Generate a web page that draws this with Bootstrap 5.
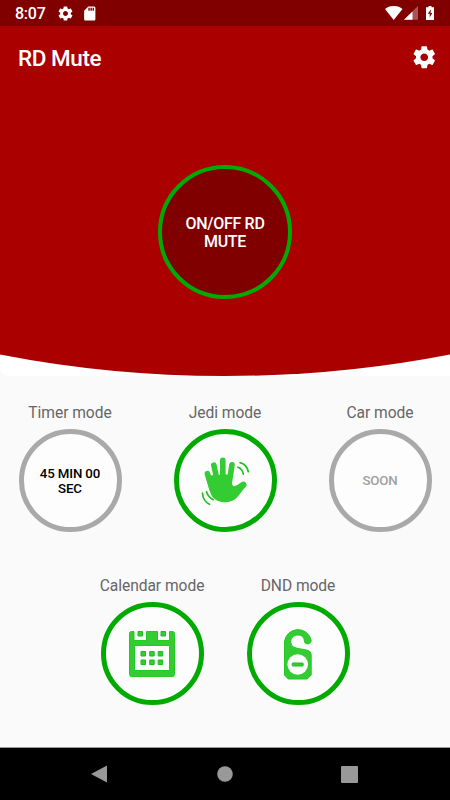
<!DOCTYPE html>
<html lang="en">
<head>
<meta charset="utf-8">
<meta name="viewport" content="width=device-width, initial-scale=1">
<title>RD Mute</title>
<link rel="stylesheet" href="https://cdn.jsdelivr.net/npm/bootstrap@5.3.0/dist/css/bootstrap.min.css">
<style>
body { font-family: Roboto, "Liberation Sans", sans-serif; background: #fafafa; height: 800px; overflow: hidden; }
svg { display: block; flex: none; }
.status-bar { height: 26px; background: #800000; padding: 0 15px 0 15px; }
.clock { font-size: 16px; line-height: 26px; font-weight: 500; letter-spacing: -.25px; padding-top: 2px; width: 42px; }
.hero { height: 350px; background: #fff; border-bottom-left-radius: 9px; display: grid; }
.hero > * { grid-area: 1 / 1; }
.title-bar { height: 62px; padding: 0 13px 0 18px; }
.title-text { font-size: 22.5px; font-weight: 500; line-height: 30px; letter-spacing: -.45px; padding-top: 1px; }
.main-toggle { width: 134px; height: 134px; border: 4px solid #0a0; background: #800000; margin-top: 76.5px; padding-top: 4px; font-size: 16px; line-height: 18px; font-weight: 500; letter-spacing: -.3px; }
.modes { height: 371px; padding-top: 26px; }
.mode-label { font-size: 15.6px; line-height: 20px; color: #666; font-weight: 400; letter-spacing: -.05px; padding-top: 1px; margin-bottom: 6px; white-space: nowrap; }
.mode { width: 103px; }
.mode-btn { width: 103px; height: 103px; border: 5px solid #0a0; background: #fdfdfd; padding: 0; font-size: 13.3px; line-height: 15px; font-weight: 500; letter-spacing: -.15px; color: #000; }
.mode-idle { border-color: #a9a9a9; }
.mode-soon { color: #a0a0a0; }
.row-top { padding: 0 18.5px; }
.row-bottom { gap: 43px; margin-top: 43px; }
.nav-keys { height: 53px; border-top: 1px solid #999; padding: 0 92px 0 91px; }
</style>
<script src="https://cdn.jsdelivr.net/npm/bootstrap@5.3.0/dist/js/bootstrap.bundle.min.js"></script>
</head>
<body class="d-flex flex-column">
<svg width="0" height="0" class="position-absolute" aria-hidden="true">
  <symbol id="gear" viewBox="0 0 24 24"><path fill="#fff" d="M19.43 12.98c.04-.32.07-.64.07-.98s-.03-.66-.07-.98l2.11-1.65c.19-.15.24-.42.12-.64l-2-3.46c-.12-.22-.39-.3-.61-.22l-2.49 1c-.52-.4-1.08-.73-1.69-.98l-.38-2.65C14.46 2.18 14.25 2 14 2h-4c-.25 0-.46.18-.49.42l-.38 2.65c-.61.25-1.17.59-1.69.98l-2.49-1c-.23-.09-.49 0-.61.22l-2 3.46c-.13.22-.07.49.12.64l2.11 1.65c-.04.32-.07.65-.07.98s.03.66.07.98l-2.11 1.65c-.19.15-.24.42-.12.64l2 3.46c.12.22.39.3.61.22l2.49-1c.52.4 1.08.73 1.69.98l.38 2.65c.03.24.24.42.49.42h4c.25 0 .46-.18.49-.42l.38-2.65c.61-.25 1.17-.59 1.69-.98l2.49 1c.23.09.49 0 .61-.22l2-3.46c.12-.22.07-.49-.12-.64l-2.11-1.65zM12 15.500c-1.930 0-3.500-1.570-3.500-3.500s1.570-3.500 3.500-3.500 3.500 1.570 3.500 3.500-1.570 3.500-3.500 3.500z"/></symbol>
</svg>

<div class="status-bar d-flex align-items-center text-white flex-shrink-0">
  <span class="clock">8:07</span>
  <svg width="17" height="17"><use href="#gear"/></svg>
  <svg class="ms-2" width="15.500" height="17" viewBox="1 0 22 24"><path fill="#fff" fill-rule="evenodd" d="M18 2h-8L4 8v12c0 1.100.9 2 2 2h12c1.100 0 2-.9 2-2V4c0-1.100-.9-2-2-2zM12 8h-2V4h2v4zm3 0h-2V4h2v4zm3 0h-2V4h2v4z"/></svg>
  <svg class="ms-auto" width="50" height="14" viewBox="0 0 50 14">
    <path fill="#fff" d="M0 2.900C5-1 12.500-1 17.500 2.900L8.700 14z"/>
    <path fill="#a65656" d="M33 0v13.700H19z"/><path fill="#fff" d="M27.500 5.400v8.300H19z"/>
    <path fill="#fff" d="M43.500 0h3v1.300H49V14h-8V1.300h2.500z"/><path fill="#800000" d="M46 3.300l-3.200 4.500h1.900v3.700L47.300 7h-1.800z"/>
  </svg>
</div>

<header class="hero flex-shrink-0 overflow-hidden">
  <svg width="450" height="350" viewBox="0 0 450 350"><path fill="#a00" d="M0 0H450V328.500Q340 350 225 350T0 328.500z"/></svg>
  <div class="text-white">
    <div class="title-bar d-flex align-items-center justify-content-between">
      <h1 class="title-text mb-0">RD Mute</h1>
      <button class="btn p-0 border-0" aria-label="Settings"><svg width="26.500" height="26.500"><use href="#gear"/></svg></button>
    </div>
    <button class="main-toggle rounded-circle d-flex align-items-center justify-content-center text-white mx-auto">ON/OFF RD<br>MUTE</button>
  </div>
</header>

<main class="modes flex-shrink-0">
  <div class="row-top d-flex justify-content-between">
    <div class="mode d-flex flex-column align-items-center">
      <div class="mode-label">Timer mode</div>
      <button class="mode-btn mode-idle rounded-circle">45 MIN 00<br>SEC</button>
    </div>
    <div class="mode d-flex flex-column align-items-center">
      <div class="mode-label">Jedi mode</div>
      <button class="mode-btn rounded-circle d-flex align-items-center justify-content-center" aria-label="Jedi mode">
        <svg width="60" height="60" viewBox="0 .8 60 60">
          <g stroke="#3c3" stroke-linecap="round" stroke-linejoin="round" fill="none">
            <path stroke-width="5.600" d="M12.400 23.500L17.500 40M18.800 15L23 34M27.800 10V34M37 14.500L34 34"/>
            <path stroke-width="6" d="M48.500 34.500L38 43"/>
            <path stroke-width="1.700" stroke="#1cc31c" d="M45 12.500Q51.500 14 53.300 21.500M43 17Q47.500 18.500 48.300 24M11.500 41.500Q13.500 47.500 18.500 49.500M7.500 43Q8 51 14.500 54"/>
          </g>
          <path fill="#3c3" d="M11 27L17 25 37 24C36.300 31 37 35 38.500 36Q41 36 46.500 32L51 36.500C45 42 43 49 36 51C29 53.500 20 51.500 16.500 45Q13.500 38 11 27z"/>
        </svg>
      </button>
    </div>
    <div class="mode d-flex flex-column align-items-center">
      <div class="mode-label">Car mode</div>
      <button class="mode-btn mode-idle mode-soon rounded-circle">SOON</button>
    </div>
  </div>
  <div class="row-bottom d-flex justify-content-center">
    <div class="mode d-flex flex-column align-items-center">
      <div class="mode-label">Calendar mode</div>
      <button class="mode-btn rounded-circle d-flex align-items-center justify-content-center" aria-label="Calendar mode">
        <svg width="46" height="46" viewBox="0 0 46 46">
          <path fill="#3c3" stroke="#22c927" stroke-width="1" fill-rule="evenodd" d="M2.500 .5H5V9.500H17.500V.5H28.500V9.500H40.500V.5H43.500Q45.500 .5 45.500 2.500V43.500Q45.500 45.500 43.500 45.500H2.500Q.5 45.500 .5 43.500V2.500Q.5 .5 2.500 .5zM5.500 14.500V39.500H40.500V14.500z"/>
          <path fill="#3c3" stroke="#1abf20" stroke-width="1" d="M9 .5h4.500v4.500h-4.500zM32 .5h4.500v4.500h-4.500zM12 20.500h4.500v4.500h-4.500zM20.700 20.500h4.500v4.500h-4.500zM29.200 20.500h4.500v4.500h-4.500zM12 29h4.500v4.500h-4.500zM20.700 29h4.500v4.500h-4.500zM29.200 29h4.500v4.500h-4.500z"/>
        </svg>
      </button>
    </div>
    <div class="mode d-flex flex-column align-items-center">
      <div class="mode-label">DND mode</div>
      <button class="mode-btn rounded-circle d-flex align-items-center justify-content-center" aria-label="DND mode">
        <svg width="29" height="52" viewBox=".8 .5 29 52">
          <path fill="#3c3" stroke="#22c927" stroke-width="1" d="M1.300 14.500A13.500 13.500 0 0 1 28 13C28 17.500 21.200 17.500 21.200 13.500C21 10 18.500 7.500 14.800 7.500C10.500 7.500 7.500 10.500 7.500 14.500C7.500 25 28 18.500 28 27V47.500L24 51.500H5L1.300 47.500z"/>
          <circle cx="14.500" cy="37" r="10.300" fill="#fdfdfd"/>
          <rect x="9" y="35.500" width="11" height="3" rx=".7" fill="#3c3" stroke="#1abf20"/>
        </svg>
      </button>
    </div>
  </div>
</main>

<nav class="nav-keys bg-black d-flex align-items-center justify-content-between flex-shrink-0" aria-label="System navigation">
  <svg width="17" height="18"><path fill="#999" d="M16 .5V17.500L0 9z"/></svg>
  <svg width="16" height="16"><circle cx="8" cy="8" r="7.800" fill="#999"/></svg>
  <svg width="17" height="17"><rect width="17" height="17" rx="1" fill="#999"/></svg>
</nav>
</body>
</html>
